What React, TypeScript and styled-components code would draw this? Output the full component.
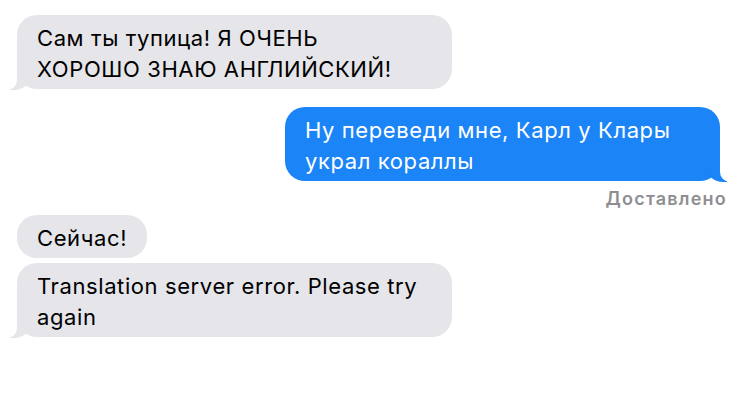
import styled, { createGlobalStyle } from "styled-components"

const GlobalStyle = createGlobalStyle`
    html, body {
        margin: 0;
        padding: 0;
        background: #ffffff;
    }
    body {
        font-family: Inter, Roboto, "Liberation Sans", sans-serif;
        -webkit-font-smoothing: antialiased;
    }
`

const messages = [
    { id: 1, mine: false, full: true, tail: true, lines: ["Сам ты тупица! Я ОЧЕНЬ", "ХОРОШО ЗНАЮ АНГЛИЙСКИЙ!"] },
    { id: 2, mine: true, full: true, tail: true, lines: ["Ну переведи мне, Карл у Клары", "украл кораллы"] },
    { id: 3, mine: false, full: false, tail: false, lines: ["Сейчас!"] },
    { id: 4, mine: false, full: true, tail: true, lines: ["Translation server error. Please try", "again"] },
]

export default function App(){
    return (
        <>
            <GlobalStyle />
            <Thread>
                {messages.map(msg => (
                    <Row key={msg.id} $mine={msg.mine}>
                        <Bubble $mine={msg.mine} $full={msg.full} $tail={msg.tail}>
                            {msg.lines.map((line, i) => (
                                <span key={i}>{line}{i < msg.lines.length - 1 && <br />}</span>
                            ))}
                        </Bubble>
                        {msg.id === 2 && <Status>Доставлено</Status>}
                    </Row>
                ))}
            </Thread>
        </>
    )
}

const Thread = styled.main`
    width: 740px;
    height: 409px;
    box-sizing: border-box;
    padding: 15px 20px 0 17px;
    display: flex;
    flex-direction: column;
`

const Row = styled.div<{ $mine: boolean }>`
    display: flex;
    flex-direction: column;
    align-items: ${p => p.$mine ? "flex-end" : "flex-start"};

    & + & {
        margin-top: 5px;
    }
    &:nth-child(2) {
        margin-top: 18px;
    }
    &:nth-child(3) {
        margin-top: 11px;
    }
`

const Bubble = styled.div<{ $mine: boolean; $full: boolean; $tail: boolean }>`
    position: relative;
    box-sizing: border-box;
    width: ${p => p.$full ? "435px" : "auto"};
    padding: 8px 20px 4px 20px;
    border-radius: 20px;
    background: ${p => p.$mine ? "#1b84f7" : "#e5e5ea"};
    color: ${p => p.$mine ? "#ffffff" : "#000000"};
    font-size: 22px;
    line-height: 31px;
    letter-spacing: 0.6px;
    white-space: nowrap;

    &::before {
        content: "";
        display: ${p => p.$tail ? "block" : "none"};
        position: absolute;
        bottom: -1px;
        ${p => p.$mine ? "right: -7px;" : "left: -7px;"}
        width: 20px;
        height: 20px;
        background: ${p => p.$mine ? "#1b84f7" : "#e5e5ea"};
        ${p => p.$mine ? "border-bottom-left-radius: 16px 14px;" : "border-bottom-right-radius: 16px 14px;"}
    }

    &::after {
        content: "";
        display: ${p => p.$tail ? "block" : "none"};
        position: absolute;
        bottom: -1px;
        ${p => p.$mine ? "right: -10px;" : "left: -10px;"}
        width: 10px;
        height: 21px;
        background: #ffffff;
        ${p => p.$mine ? "border-bottom-left-radius: 10px;" : "border-bottom-right-radius: 10px;"}
    }
`

const Status = styled.div`
    margin-top: 7px;
    margin-right: -7px;
    color: #8e8e93;
    font-size: 18px;
    font-weight: 600;
    line-height: 22px;
    letter-spacing: 1.2px;
`
